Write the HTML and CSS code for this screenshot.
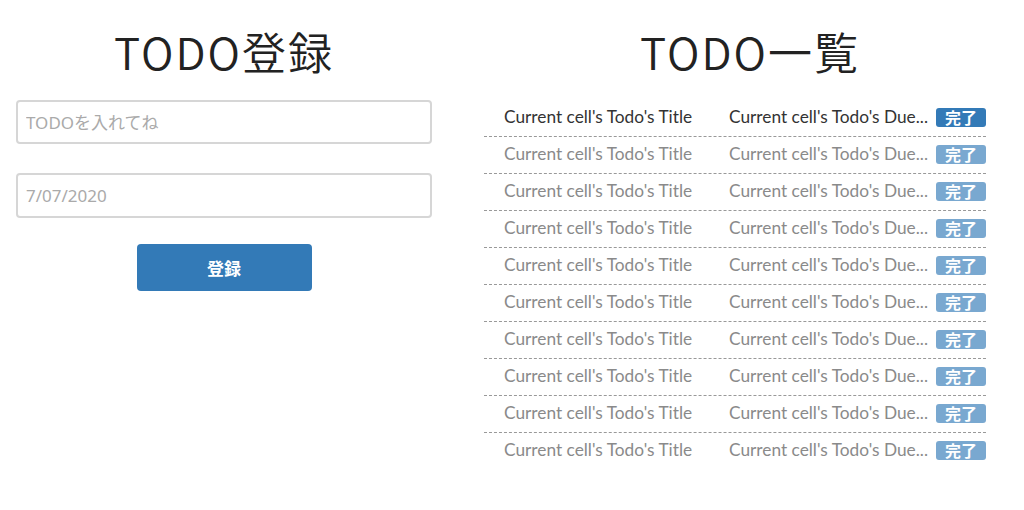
FILE: index.html
```html
<!DOCTYPE html>
<html lang="ja">
<head>
    <meta charset="UTF-8">
    <meta name="viewport" content="width=device-width, initial-scale=1.0">
    <title>TODO</title>
    <link rel="stylesheet" href="styles.css">
</head>
<body>
    <div class="page">
        <div class="register">
            <h1>TODO登録</h1>
            <input type="text" class="field" placeholder="TODOを入れてね">
            <input type="text" class="field field-date" placeholder="7/07/2020">
            <button class="submit">登録</button>
        </div>

        <div class="list-area">
            <h1>TODO一覧</h1>
            <ul class="todo-list">
                <li class="todo current">
                    <span class="todo-title">Current cell's Todo's Title</span>
                    <span class="todo-due">Current cell's Todo's Due...</span>
                    <span class="done">完了</span>
                </li>
                <li class="todo">
                    <span class="todo-title">Current cell's Todo's Title</span>
                    <span class="todo-due">Current cell's Todo's Due...</span>
                    <span class="done">完了</span>
                </li>
                <li class="todo">
                    <span class="todo-title">Current cell's Todo's Title</span>
                    <span class="todo-due">Current cell's Todo's Due...</span>
                    <span class="done">完了</span>
                </li>
                <li class="todo">
                    <span class="todo-title">Current cell's Todo's Title</span>
                    <span class="todo-due">Current cell's Todo's Due...</span>
                    <span class="done">完了</span>
                </li>
                <li class="todo">
                    <span class="todo-title">Current cell's Todo's Title</span>
                    <span class="todo-due">Current cell's Todo's Due...</span>
                    <span class="done">完了</span>
                </li>
                <li class="todo">
                    <span class="todo-title">Current cell's Todo's Title</span>
                    <span class="todo-due">Current cell's Todo's Due...</span>
                    <span class="done">完了</span>
                </li>
                <li class="todo">
                    <span class="todo-title">Current cell's Todo's Title</span>
                    <span class="todo-due">Current cell's Todo's Due...</span>
                    <span class="done">完了</span>
                </li>
                <li class="todo">
                    <span class="todo-title">Current cell's Todo's Title</span>
                    <span class="todo-due">Current cell's Todo's Due...</span>
                    <span class="done">完了</span>
                </li>
                <li class="todo">
                    <span class="todo-title">Current cell's Todo's Title</span>
                    <span class="todo-due">Current cell's Todo's Due...</span>
                    <span class="done">完了</span>
                </li>
                <li class="todo">
                    <span class="todo-title">Current cell's Todo's Title</span>
                    <span class="todo-due">Current cell's Todo's Due...</span>
                    <span class="done">完了</span>
                </li>
            </ul>
        </div>
    </div>
</body>
</html>
```

FILE: styles.css
```css
body {
    margin: 0;
    font-family: "Noto Sans CJK JP", "Noto Sans", sans-serif;
    color: #333;
    background-color: #fff;
}
.page {
    display: flex;
}
h1 {
    margin: 19px 0 17px;
    font-family: "Noto Sans CJK JP", sans-serif;
    font-size: 44px;
    font-weight: 350;
    letter-spacing: 2px;
    line-height: 64px;
    text-align: center;
    color: #222;
}
.register {
    width: 416px;
    padding: 0 16px;
    display: flex;
    flex-direction: column;
    align-items: center;
}
.field {
    width: 100%;
    height: 44px;
    box-sizing: border-box;
    padding: 0 8px;
    border: 2px solid #d6d6d6;
    border-radius: 4px;
    font-family: "Noto Sans", "Noto Sans CJK JP", sans-serif;
    font-size: 17px;
    color: #555;
}
.field::placeholder {
    color: #aaa;
}
.field-date {
    margin-top: 29px;
    height: 45px;
}
.submit {
    margin-top: 26px;
    width: 175px;
    height: 47px;
    background-color: #337ab7;
    color: white;
    border: none;
    border-radius: 4px;
    font-family: "Noto Sans CJK JP", sans-serif;
    font-size: 17px;
    font-weight: bold;
}
.list-area {
    flex: 1;
    padding-left: 28px;
}
.todo-list {
    list-style: none;
    margin: 0 38px 0 8px;
    padding: 0;
}
.todo {
    display: flex;
    align-items: center;
    height: 32px;
    padding-bottom: 4px;
    border-bottom: 1px dashed #999;
    font-family: Lato, sans-serif;
    font-size: 17.3px;
    color: #8a8a8a;
}
.todo:last-child {
    border-bottom: none;
}
.todo.current {
    color: #333;
}
.todo-title {
    width: 225px;
    padding-left: 20px;
}
.todo-due {
    flex: 1;
}
.done {
    width: 50px;
    height: 19px;
    line-height: 19px;
    margin-top: 3px;
    border-radius: 3px;
    background-color: #337ab7;
    color: white;
    text-align: center;
    font-family: "Noto Sans CJK JP", sans-serif;
    font-size: 16px;
    font-weight: bold;
    opacity: 0.65;
}
.current .done {
    opacity: 1;
}
```
